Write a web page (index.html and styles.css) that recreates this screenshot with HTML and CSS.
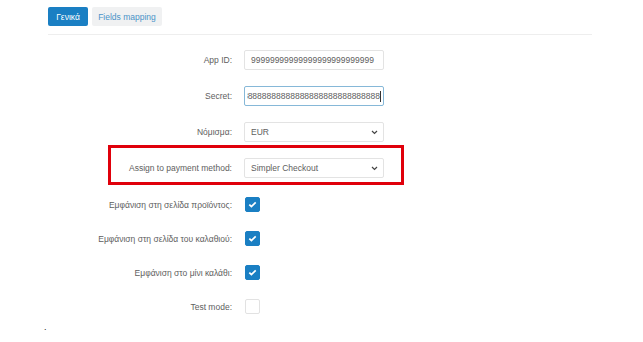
FILE: index.html
```html
<!DOCTYPE html>
<html>
<head>
<meta charset="utf-8">
<link rel="stylesheet" href="styles.css">
</head>
<body>
<div class="page">
  <div class="tabs">
    <span class="tab tab-active">Γενικά</span>
    <span class="tab tab-plain">Fields mapping</span>
  </div>
  <div class="divider"></div>
  <div class="form">
    <div class="row">
      <label class="lbl">App ID:</label>
      <div class="field">99999999999999999999999999</div>
    </div>
    <div class="row">
      <label class="lbl">Secret:</label>
      <div class="field field-focus"><span class="secret-wrap"><span class="secret">888888888888888888888888888888</span></span><span class="caret"></span></div>
    </div>
    <div class="row">
      <label class="lbl">Νόμισμα:</label>
      <div class="field field-select"><span>EUR</span>
        <svg class="chev" width="7" height="5" viewBox="0 0 7 5"><path d="M1 1 L3.5 3.5 L6 1" fill="none" stroke="#444" stroke-width="1.2"/></svg>
      </div>
    </div>
    <div class="row">
      <label class="lbl">Assign to payment method:</label>
      <div class="field field-select"><span>Simpler Checkout</span>
        <svg class="chev" width="7" height="5" viewBox="0 0 7 5"><path d="M1 1 L3.5 3.5 L6 1" fill="none" stroke="#444" stroke-width="1.2"/></svg>
      </div>
    </div>
    <div class="row row-check">
      <label class="lbl">Εμφάνιση στη σελίδα προϊόντος:</label>
      <span class="check check-on"><svg width="9" height="7" viewBox="0 0 9 7"><path d="M1.3 3.6 L3.4 5.5 L7.7 1.3" fill="none" stroke="#fff" stroke-width="1.7"/></svg></span>
    </div>
    <div class="row row-check">
      <label class="lbl">Εμφάνιση στη σελίδα του καλαθιού:</label>
      <span class="check check-on"><svg width="9" height="7" viewBox="0 0 9 7"><path d="M1.3 3.6 L3.4 5.5 L7.7 1.3" fill="none" stroke="#fff" stroke-width="1.7"/></svg></span>
    </div>
    <div class="row row-check">
      <label class="lbl">Εμφάνιση στο μίνι καλάθι:</label>
      <span class="check check-on"><svg width="9" height="7" viewBox="0 0 9 7"><path d="M1.3 3.6 L3.4 5.5 L7.7 1.3" fill="none" stroke="#fff" stroke-width="1.7"/></svg></span>
    </div>
    <div class="row row-check">
      <label class="lbl">Test mode:</label>
      <span class="check"></span>
    </div>
  </div>
  <div class="highlight"></div>
</div>
<div class="note">.</div>
</body>
</html>
```
FILE: styles.css
```css
html, body {
  margin: 0;
  padding: 0;
  background: #fff;
}
body {
  font-family: "Liberation Sans", Arial, sans-serif;
  font-size: 8.5px;
  color: #5e5e5e;
}
.page {
  position: relative;
  width: 544px;
  padding: 7px 0 0 48px;
}
.tabs {
  display: flex;
  gap: 4px;
}
.tab {
  display: flex;
  align-items: center;
  justify-content: center;
  height: 19px;
  border-radius: 2px;
  font-size: 8.5px;
}
.tab-active {
  width: 40px;
  background: #1a7fc3;
  color: #fff;
}
.tab-plain {
  width: 70px;
  background: #f0f1f2;
  color: #4a93c8;
}
.divider {
  margin-top: 8px;
  height: 0;
  border-top: 1px solid #eeeeee;
}
.form {
  margin-top: 15px;
  display: flex;
  flex-direction: column;
}
.row {
  display: grid;
  grid-template-columns: 184px 140px;
  column-gap: 12px;
  align-items: center;
  height: 20px;
  margin-bottom: 16px;
}
.row-check {
  height: 15px;
  margin-bottom: 19px;
}
.row:nth-child(4) {
  margin-bottom: 19px;
}
.lbl {
  text-align: right;
  color: #5e5e5e;
}
.field {
  box-sizing: border-box;
  height: 20px;
  border: 1px solid #e3e3e3;
  border-radius: 2px;
  display: flex;
  align-items: center;
  padding: 0 6px;
  color: #5e5e5e;
  overflow: hidden;
  white-space: nowrap;
}
.field-focus {
  border-color: #86b8d8;
  padding: 0 2px 0 2px;
}
.secret-wrap {
  flex: 1;
  min-width: 0;
  overflow: hidden;
  display: flex;
  justify-content: flex-end;
}
.secret {
  flex: none;
}
.caret {
  display: inline-block;
  width: 1px;
  height: 11px;
  background: #333;
  flex: none;
}
.field-select {
  justify-content: space-between;
  padding-right: 5px;
}
.chev {
  flex: none;
}
.check {
  box-sizing: border-box;
  width: 15px;
  height: 15px;
  margin-left: 1px;
  border-radius: 2px;
  border: 1px solid #e2e2e2;
  display: flex;
  align-items: center;
  justify-content: center;
}
.check-on {
  background: #1a7fc3;
  border-color: #1a7fc3;
}
.highlight {
  position: absolute;
  left: 108px;
  top: 145px;
  width: 296px;
  height: 40px;
  box-sizing: border-box;
  border: 3px solid #e0000b;
}
.note {
  padding-left: 44px;
  margin-top: -11px;
  font-size: 9px;
  line-height: 10px;
  color: #222;
}
```
